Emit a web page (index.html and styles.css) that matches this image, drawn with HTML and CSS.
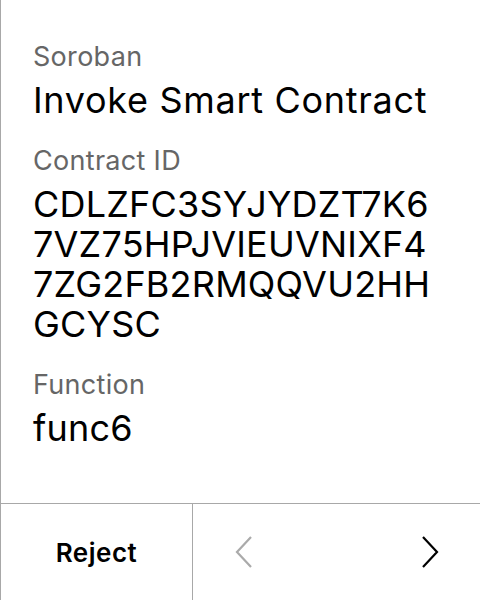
FILE: index.html
```html
<!DOCTYPE html>
<html>
<head>
<meta charset="utf-8">
<link rel="stylesheet" href="styles.css">
</head>
<body>
<div class="screen">
  <div class="content">
    <div class="field">
      <div class="label">Soroban</div>
      <div class="value title">Invoke Smart Contract</div>
    </div>
    <div class="field">
      <div class="label">Contract ID</div>
      <div class="value wrap">CDLZFC3SYJYDZT7K67VZ75HPJVIEUVNIXF47ZG2FB2RMQQVU2HHGCYSC</div>
    </div>
    <div class="field">
      <div class="label">Function</div>
      <div class="value">func6</div>
    </div>
  </div>
  <div class="footer">
    <div class="reject">Reject</div>
    <div class="nav">
      <svg class="chev" width="20" height="34" viewBox="0 0 20 34"><path d="M17 2 L3 17 L17 32" fill="none" stroke="#aaaaaa" stroke-width="2.2"/></svg>
      <svg class="chev" width="20" height="34" viewBox="0 0 20 34"><path d="M3 2 L17 17 L3 32" fill="none" stroke="#000000" stroke-width="2.2"/></svg>
    </div>
  </div>
</div>
</body>
</html>
```
FILE: styles.css
```css
html, body {
  margin: 0;
  padding: 0;
  background: #ffffff;
}
.screen {
  width: 480px;
  height: 600px;
  box-sizing: border-box;
  border-left: 1px solid #a8a8a8;
  display: flex;
  flex-direction: column;
  font-family: Inter, "Noto Sans", sans-serif;
  color: #000;
}
.content {
  flex: 1;
  padding: 41px 32px 0 32px;
  display: flex;
  flex-direction: column;
  gap: 25px;
}
.label {
  font-size: 27px;
  line-height: 32px;
  letter-spacing: 0.3px;
  color: #666666;
  margin-bottom: 7px;
}
.value {
  font-size: 36px;
  line-height: 40px;
  letter-spacing: 0.2px;
}
.value.title {
  letter-spacing: 0.7px;
}
.value.wrap {
  word-break: break-all;
  width: 412px;
}
.footer {
  height: 96px;
  border-top: 1px solid #a8a8a8;
  display: flex;
}
.reject {
  width: 191px;
  border-right: 1px solid #a8a8a8;
  display: flex;
  align-items: center;
  justify-content: center;
  font-size: 26px;
  font-weight: 600;
  letter-spacing: 0.5px;
}
.nav {
  flex: 1;
  display: flex;
  align-items: center;
  justify-content: space-between;
  padding: 0 40px 0 41px;
}
.chev {
  display: block;
}
```
